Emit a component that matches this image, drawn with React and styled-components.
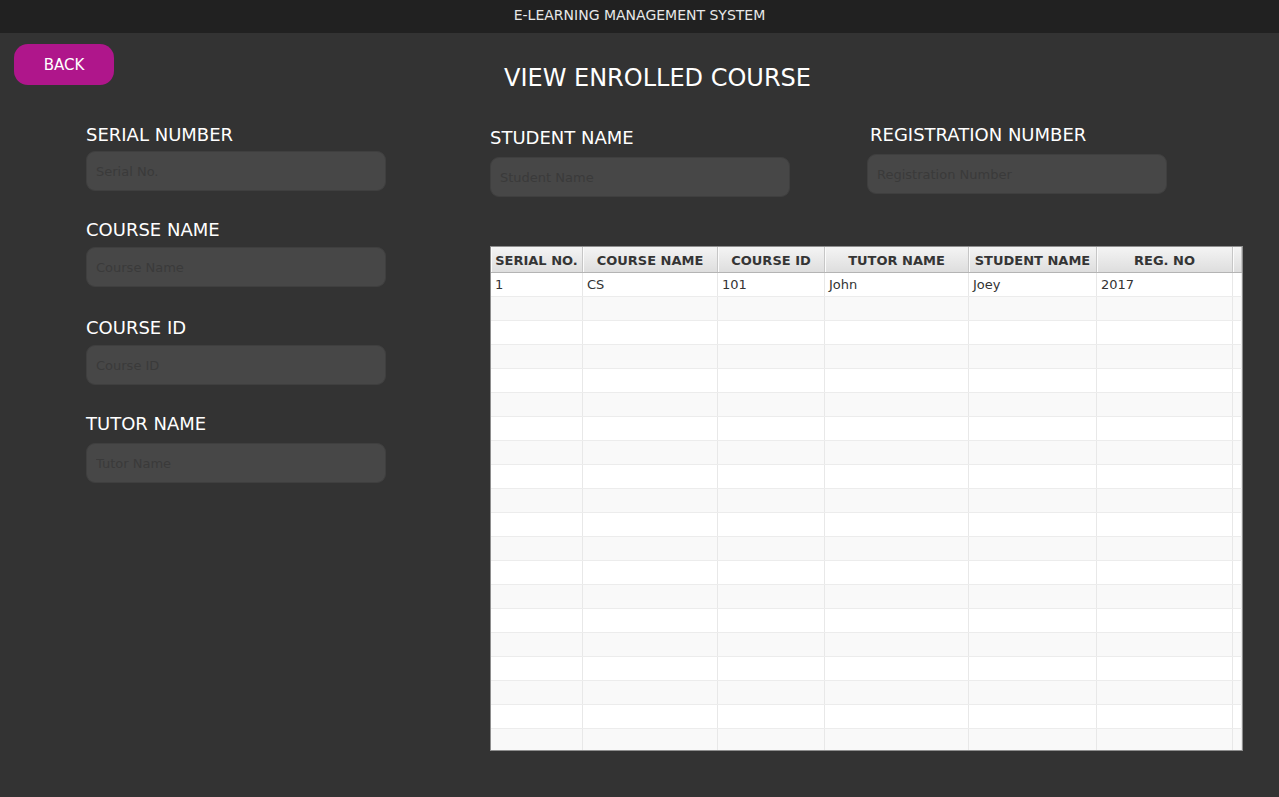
import styled, { createGlobalStyle } from 'styled-components';

const GlobalStyle = createGlobalStyle`
  html, body {
    margin: 0;
    padding: 0;
    background: #333333;
  }
  body {
    font-family: "DejaVu Sans", "Liberation Sans", sans-serif;
  }
  * {
    box-sizing: border-box;
  }
`;

const Page = styled.div`
  min-height: 100vh;
  background: #333333;
  color: #ffffff;
`;

const TitleBar = styled.div`
  height: 33px;
  background: #212121;
  display: flex;
  align-items: center;
  justify-content: center;
  font-size: 14px;
  color: #e8e8e8;
  padding-bottom: 3px;
`;

const Header = styled.div`
  display: flex;
  align-items: flex-start;
  padding: 11px 0 0 14px;
`;

const BackButton = styled.button`
  width: 100px;
  height: 41px;
  border: none;
  border-radius: 14px;
  background: #af168b;
  color: #ffffff;
  font-family: inherit;
  font-size: 15px;
  cursor: pointer;
  padding: 0;

  &:hover {
    filter: brightness(1.1);
  }
`;

const Heading = styled.h1`
  flex: 1;
  margin: 20px 78px 0 0;
  font-size: 24px;
  line-height: 28px;
  font-weight: normal;
  text-align: center;
  color: #ffffff;
`;

const Content = styled.div`
  display: flex;
  padding: 32px 0 0 86px;
`;

const LeftColumn = styled.div`
  width: 300px;
  display: flex;
  flex-direction: column;
`;

const RightSection = styled.div`
  width: 753px;
  margin-left: 104px;
`;

const TopRow = styled.div`
  display: flex;
  align-items: flex-start;
  gap: 77px;
`;

const Field = styled.div`
  width: 300px;
  display: flex;
  flex-direction: column;
  gap: ${({ $gap }) => $gap}px;
  margin-top: ${({ $offset }) => $offset || 0}px;
`;

const Label = styled.label`
  font-size: 18px;
  line-height: 22px;
  color: #ffffff;
  padding-left: ${({ $indent }) => $indent || 0}px;
`;

const Input = styled.input`
  width: 300px;
  height: 40px;
  border: 1px solid #3f3f3f;
  border-radius: 9px;
  background: #474747;
  padding: 0 9px;
  font-family: inherit;
  font-size: 13px;
  color: #dddddd;
  outline: none;

  &::placeholder {
    color: #3a3a3a;
  }
`;

const TableBox = styled.div`
  margin-top: 49px;
  width: 753px;
  height: 505px;
  border: 1px solid #8e8e8e;
  background: #ffffff;
  overflow: hidden;
`;

const GRID = '92px 135px 107px 144px 128px 136px 1fr';

const HeaderRow = styled.div`
  display: grid;
  grid-template-columns: ${GRID};
  height: 26px;
  border-bottom: 1px solid #b4b4b4;
  background: linear-gradient(#f4f4f4, #dedede);
`;

const HeaderCell = styled.div`
  border-right: 1px solid #c6c6c6;
  box-shadow: inset 1px 0 0 #fbfbfb;
  font-size: 13px;
  font-weight: bold;
  line-height: 27px;
  text-align: center;
  color: #353535;
  white-space: nowrap;
  overflow: hidden;
`;

const Row = styled.div`
  display: grid;
  grid-template-columns: ${GRID};
  height: 24px;
  border-bottom: 1px solid #ececec;
  background: ${({ $odd }) => ($odd ? '#f9f9f9' : '#ffffff')};
`;

const Cell = styled.div`
  border-right: 1px solid #e8e8e8;
  padding: 0 4px;
  font-size: 13px;
  line-height: 23px;
  color: #333333;
  white-space: nowrap;
  overflow: hidden;
`;

const columns = ['SERIAL NO.', 'COURSE NAME', 'COURSE ID', 'TUTOR NAME', 'STUDENT NAME', 'REG. NO'];

const enrolled = [
  { serial: '1', course: 'CS', courseId: '101', tutor: 'John', student: 'Joey', reg: '2017' },
];

const leftFields = [
  { label: 'SERIAL NUMBER', placeholder: 'Serial No.', gap: 5, offset: 0 },
  { label: 'COURSE NAME', placeholder: 'Course Name', gap: 6, offset: 28 },
  { label: 'COURSE ID', placeholder: 'Course ID', gap: 6, offset: 30 },
  { label: 'TUTOR NAME', placeholder: 'Tutor Name', gap: 8, offset: 28 },
];

const ROW_COUNT = 20;

const App = () => {
  const rows = Array.from({ length: ROW_COUNT }, (_, i) => enrolled[i] || null);

  return (
    <Page>
      <GlobalStyle />
      <TitleBar>E-LEARNING MANAGEMENT SYSTEM</TitleBar>

      <Header>
        <BackButton>BACK</BackButton>
        <Heading>VIEW ENROLLED COURSE</Heading>
      </Header>

      <Content>
        <LeftColumn>
          {leftFields.map((f) => (
            <Field key={f.label} $gap={f.gap} $offset={f.offset}>
              <Label>{f.label}</Label>
              <Input placeholder={f.placeholder} />
            </Field>
          ))}
        </LeftColumn>

        <RightSection>
          <TopRow>
            <Field $gap={8} $offset={3}>
              <Label>STUDENT NAME</Label>
              <Input placeholder="Student Name" />
            </Field>
            <Field $gap={8}>
              <Label $indent={3}>REGISTRATION NUMBER</Label>
              <Input placeholder="Registration Number" />
            </Field>
          </TopRow>

          <TableBox>
            <HeaderRow>
              {columns.map((c) => (
                <HeaderCell key={c}>{c}</HeaderCell>
              ))}
              <HeaderCell />
            </HeaderRow>
            {rows.map((r, i) => (
              <Row key={i} $odd={i % 2 === 1}>
                <Cell>{r?.serial}</Cell>
                <Cell>{r?.course}</Cell>
                <Cell>{r?.courseId}</Cell>
                <Cell>{r?.tutor}</Cell>
                <Cell>{r?.student}</Cell>
                <Cell>{r?.reg}</Cell>
                <Cell />
              </Row>
            ))}
          </TableBox>
        </RightSection>
      </Content>
    </Page>
  );
};

export default App;
